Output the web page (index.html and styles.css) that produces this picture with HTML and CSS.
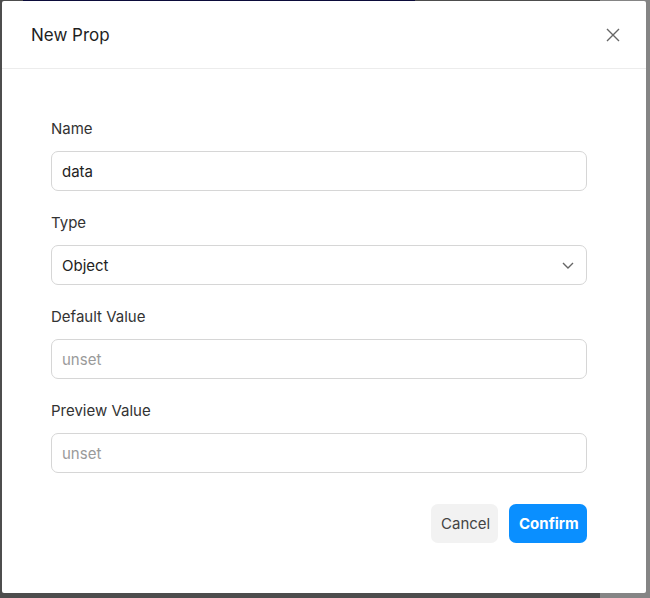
FILE: index.html
```html
<!DOCTYPE html>
<html>
<head>
<meta charset="utf-8">
<link rel="stylesheet" href="styles.css">
</head>
<body>
<div class="topstrip"></div>
<div class="dialog">
  <div class="header">
    <div class="title">New Prop</div>
    <svg class="close" width="14" height="14" viewBox="0 0 14 14"><path d="M1 1 L13 13 M13 1 L1 13" stroke="#666" stroke-width="1.4" fill="none"/></svg>
  </div>
  <div class="body">
    <div class="field">
      <label class="label">Name</label>
      <div class="input">data</div>
    </div>
    <div class="field">
      <label class="label">Type</label>
      <div class="input select">Object
        <svg class="chev" width="12" height="7" viewBox="0 0 12 7"><path d="M1 1 L6 6 L11 1" stroke="#666" stroke-width="1.4" fill="none"/></svg>
      </div>
    </div>
    <div class="field">
      <label class="label">Default Value</label>
      <div class="input placeholder">unset</div>
    </div>
    <div class="field">
      <label class="label">Preview Value</label>
      <div class="input placeholder">unset</div>
    </div>
    <div class="actions">
      <button class="btn cancel">Cancel</button>
      <button class="btn confirm">Confirm</button>
    </div>
  </div>
</div>
</body>
</html>
```
FILE: styles.css
```css
html, body {
  margin: 0;
  padding: 0;
}
body {
  width: 650px;
  height: 598px;
  background: linear-gradient(to right, #4d4d4d 0, #4d4d4d 600px, #858585 600px);
  font-family: Inter, "Noto Sans", sans-serif;
  position: relative;
  overflow: hidden;
}
.topstrip {
  position: absolute;
  left: 23px;
  top: 0;
  width: 392px;
  height: 1px;
  background: #0b0b3a;
}
.dialog {
  position: absolute;
  left: 2px;
  top: 1px;
  width: 644px;
  height: 592px;
  background: #fff;
  border-radius: 2px;
  box-sizing: border-box;
}
.header {
  height: 67px;
  border-bottom: 1px solid #ececec;
  display: flex;
  align-items: center;
  justify-content: space-between;
  padding: 0 26px 0 29px;
}
.title {
  font-size: 17px;
  color: #1f1f1f;
  margin-top: 1px;
}
.body {
  padding: 49px 59px 0 49px;
}
.field {
  display: flex;
  flex-direction: column;
  margin-bottom: 21px;
}
.label {
  font-size: 15px;
  line-height: 22px;
  color: #333;
  margin-bottom: 11px;
}
.input {
  height: 40px;
  box-sizing: border-box;
  border: 1px solid #d6d6d6;
  border-radius: 7px;
  padding: 0 10px;
  display: flex;
  align-items: center;
  font-size: 15px;
  color: #222;
}
.placeholder {
  color: #9a9a9a;
}
.select {
  justify-content: space-between;
  padding-right: 12px;
}
.actions {
  display: flex;
  justify-content: flex-end;
  gap: 11px;
  margin-top: 31px;
}
.btn {
  height: 39px;
  border: none;
  border-radius: 7px;
  font-family: Inter, "Noto Sans", sans-serif;
  font-size: 15px;
  padding: 0 10px;
}
.cancel {
  background: #f2f2f2;
  color: #444;
  width: 67px;
}
.confirm {
  background: #0a8fff;
  color: #fff;
  font-weight: 700;
  width: 78px;
}
```
